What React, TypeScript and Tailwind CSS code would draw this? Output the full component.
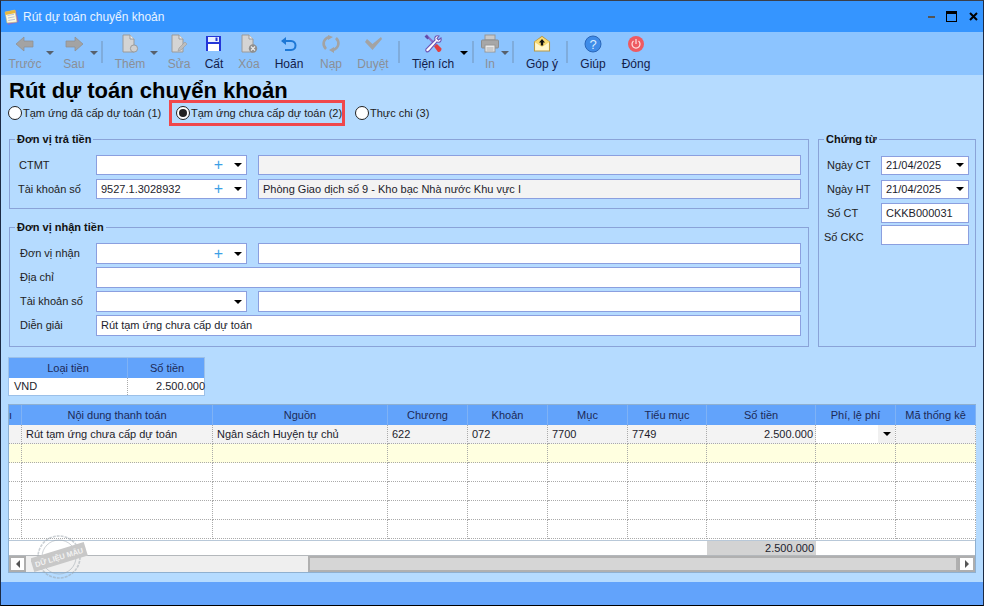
import React from "react";

const G = "#a3a3a3";
const Svg = ({ children }: { children: React.ReactNode }) => (
  <svg width="20" height="20" viewBox="0 0 20 20">{children}</svg>
);

const ArrowL = () => (
  <Svg><path d="M1 10 L9 3 V7 H18 V13 H9 V17 Z" fill={G} stroke="#8e8e8e" strokeWidth="0.7" /></Svg>
);
const ArrowR = () => (
  <Svg><path d="M19 10 L11 3 V7 H2 V13 H11 V17 Z" fill={G} stroke="#8e8e8e" strokeWidth="0.7" /></Svg>
);
const Doc = ({ children }: { children?: React.ReactNode }) => (
  <Svg>
    <path d="M3 1 H10 L14 5 V18 H3 Z" fill="#d4d4d4" stroke="#9a9a9a" strokeWidth="1" />
    <path d="M10 1 V5 H14" fill="#eee" stroke="#9a9a9a" strokeWidth="1" />
    {children}
  </Svg>
);
const Floppy = () => (
  <Svg>
    <rect x="2" y="2" width="15" height="15" fill="#2436d8" />
    <rect x="4" y="3" width="11" height="5" fill="#e8f0ff" />
    <rect x="11.5" y="3.5" width="2" height="3.5" fill="#2436d8" />
    <rect x="4" y="10" width="11" height="7" fill="#fff" />
  </Svg>
);
const Undo = () => (
  <Svg>
    <path d="M3 7 H12 C18 7 18 16 12 16 H6" fill="none" stroke="#1d78d6" strokeWidth="2" />
    <path d="M7 3 L2 7 L7 11 Z" fill="#1d78d6" />
  </Svg>
);
const Reload = () => (
  <Svg>
    <path d="M5 15 C1 11 2 5 8 3 M15 4 C19 8 18 14 12 16" fill="none" stroke={G} strokeWidth="2.6" />
    <path d="M7 1 L12 3 L7 6 Z M13 13 L8 16 L13 19 Z" fill={G} />
  </Svg>
);
const Check = () => (
  <Svg><path d="M2 8 L4 5 L9.5 10 L18 3 L19 5 L9.5 16 Z" fill={G} /></Svg>
);
const Tools = () => (
  <Svg>
    <path d="M3 1 L17 15" stroke="#8b6fc9" strokeWidth="2.2" />
    <path d="M1.5 2.5 L4 1 L6 4 L4.5 5.5 Z" fill="#5f4aa8" />
    <path d="M16 2 C13 1 11 3 12 6 L3 15 C2 17 4 19 6 17 L14 8 C17 9 19 7 18 4 L15.5 6 L14 4.5 Z" fill="#fff" stroke="#6d55b5" strokeWidth="1.1" />
    <path d="M11 12.5 L14 10 L18.5 14.5 C18.5 17 17 18.5 15 18 Z" fill="#e2403f" />
  </Svg>
);
const Printer = () => (
  <Svg>
    <rect x="5" y="1" width="10" height="5" fill="#c9c9c9" stroke="#979797" />
    <rect x="1.5" y="6" width="17" height="8" rx="1" fill="#a7a7a7" stroke="#8d8d8d" />
    <rect x="5" y="11" width="10" height="7" fill="#ececec" stroke="#979797" />
    <path d="M6.5 14 H13.5 M6.5 16 H13.5" stroke="#a8a8a8" />
  </Svg>
);
const Mail = () => (
  <Svg>
    <path d="M2.5 8 L10 2.5 L17.5 8 V17 H2.5 Z" fill="#fff7cf" stroke="#b99a45" strokeWidth="1.1" />
    <path d="M2.5 8 L10 13 L17.5 8 L10 3 Z" fill="#f8da72" />
    <path d="M10 5 L13 8.5 H11.2 V11.5 H8.8 V8.5 H7 Z" fill="#111" />
  </Svg>
);
const Help = () => (
  <svg width="20" height="20" viewBox="0 0 20 20">
    <circle cx="10" cy="10" r="8" fill="#3f8ce8" stroke="#2a66b8" />
    <text x="10" y="14.5" textAnchor="middle" fontSize="13" fill="#d8ecff" fontFamily="'Liberation Sans', sans-serif">?</text>
  </svg>
);
const Power = () => (
  <svg width="20" height="20" viewBox="0 0 20 20">
    <circle cx="10" cy="10" r="8" fill="#ee5a61" />
    <path d="M7.5 7 A4 4 0 1 0 12.5 7" fill="none" stroke="#ffe2e2" strokeWidth="1.2" />
    <path d="M10 5 V10" stroke="#ffe2e2" strokeWidth="1.2" />
  </svg>
);

const Caret = ({ dim }: { dim?: boolean }) => (
  <div className={`w-0 h-0 border-x-[4px] border-x-transparent border-t-[4px] ${dim ? "border-t-[#57606c]" : "border-t-black"}`} />
);

const Tool = ({ label, icon, off, className }: { label: string; icon: React.ReactNode; off?: boolean; className: string }) => (
  <div className={`flex flex-col items-center shrink-0 ${className}`}>
    <div className="h-[20px] mt-[2px] flex items-center">{icon}</div>
    <div className={`mt-[2px] text-[12px] leading-[16px] whitespace-nowrap ${off ? "text-[#8b8f96]" : "text-[#14204a]"}`}>{label}</div>
  </div>
);
const Drop = ({ className, dim }: { className: string; dim?: boolean }) => (
  <div className={`shrink-0 flex justify-center pt-[19px] ${className}`}><Caret dim={dim} /></div>
);
const Sep = ({ className }: { className: string }) => (
  <div className={`shrink-0 w-[2px] h-[22px] mt-[9px] bg-[#7facdc] ${className}`} />
);

const Box = ({ className, value, plus, drop, off }: { className: string; value?: string; plus?: boolean; drop?: boolean; off?: boolean }) => (
  <div className={`shrink-0 border border-[#8b9fdf] flex items-center pl-[4px] text-[11px] text-[#1c1c2c] whitespace-nowrap overflow-hidden ${off ? "bg-[#f3f3f3]" : "bg-white"} ${className}`}>
    <span className="flex-1">{value}</span>
    {plus && <span className="text-[16px] leading-none text-[#3d9fe6] mr-[11px]">+</span>}
    {drop && <span className="mr-[4px]"><Caret /></span>}
  </div>
);

const Row = ({ label, children, className }: { label: string; children: React.ReactNode; className: string }) => (
  <div className="flex items-center">
    <div className={`w-[86px] shrink-0 text-[11px] text-[#222] whitespace-nowrap ${className}`}>{label}</div>
    {children}
  </div>
);

const Legend = ({ children }: { children: React.ReactNode }) => (
  <legend className="ml-[5px] px-[2px] text-[11px] leading-[14px] font-bold text-[#111]">{children}</legend>
);

const Radio = ({ on, label, className }: { on?: boolean; label: string; className: string }) => (
  <div className={`flex items-center shrink-0 ${className}`}>
    <div className="w-[14px] h-[14px] shrink-0 rounded-full bg-white border border-[#222] flex items-center justify-center">
      {on && <div className="w-[8px] h-[8px] rounded-full bg-[#222]" />}
    </div>
    <span className="ml-[1px] text-[11px] text-[#222] whitespace-nowrap">{label}</span>
  </div>
);

const cols = "grid grid-cols-[13px_191px_175px_80px_80px_80px_79px_109px_80px_80px]";
const heads = ["", "Nội dung thanh toán", "Nguồn", "Chương", "Khoản", "Mục", "Tiểu mục", "Số tiền", "Phí, lệ phí", "Mã thống kê"];
const first = ["", "Rút tạm ứng chưa cấp dự toán", "Ngân sách Huyện tự chủ", "622", "072", "7700", "7749", "2.500.000", "", ""];
const cell = "h-[19px] border-r border-b border-dotted border-[#aaaaaa]";

const BodyRow = ({ tone }: { tone: string }) => (
  <div className={cols}>
    {heads.map((_, i) => <div key={i} className={`${cell} ${tone}`} />)}
  </div>
);

export default function App() {
  return (
    <div className="w-[984px] h-[606px] flex flex-col border-t border-b border-x border-t-[#3a3f4a] border-b-black border-x-[#1b2a44] overflow-hidden font-['Liberation_Sans',sans-serif]">
      <div className="h-[31px] shrink-0 bg-[#3595ff] flex items-center">
        <svg className="ml-[3px]" width="17" height="18" viewBox="0 0 17 18">
          <path d="M2 5 L12 2 L15 14 L4 17 Z" fill="#7f6fd8" />
          <path d="M1 4 L11 2 L13 14 L3 15 Z" fill="#fdf8e0" stroke="#c8b870" strokeWidth="0.6" />
          <path d="M1 4 L11 2 L11.6 5 L1.6 7 Z" fill="#e8b73e" />
          <path d="M3.5 7.5 L10 6.3 M4 10 L10.5 8.8 M4.3 12.5 L11 11.3" stroke="#b9c4d8" />
        </svg>
        <span className="ml-[2px] text-[12px] text-[#e8f3ff] whitespace-nowrap">Rút dự toán chuyển khoản</span>
        <div className="flex-1" />
        <div className="w-[7px] h-[2px] bg-[#555]" />
        <div className="ml-[11px] w-[11px] h-[11px] border border-black border-t-[3px]" />
        <span className="ml-[11px] mr-[4px] w-[11px] h-[11px] flex items-center justify-center">
          <svg width="9" height="9" viewBox="0 0 9 9"><path d="M1 1 L8 8 M8 1 L1 8" stroke="#000" strokeWidth="2" /></svg>
        </span>
      </div>

      <div className="h-[43px] shrink-0 bg-[#8cc4ff] flex pl-[6px]">
        <Tool className="w-[36px]" off label="Trước" icon={<ArrowL />} />
        <Drop className="w-[13px]" dim />
        <Tool className="w-[36px]" off label="Sau" icon={<ArrowR />} />
        <Drop className="w-[2px] ml-[1px]" dim />
        <Sep className="ml-[6px]" />
        <Tool className="w-[40px] ml-[7px]" off label="Thêm" icon={<Doc><circle cx="14" cy="14.5" r="3.6" fill="#cfcfcf" stroke="#9a9a9a" /></Doc>} />
        <Drop className="w-[8px]" dim />
        <Tool className="w-[30px] ml-[6px]" off label="Sửa" icon={<Doc><path d="M9 17 L10 14 L16 8 L18 10 L12 16 Z" fill="#bdbdbd" stroke="#9a9a9a" strokeWidth="0.6" /></Doc>} />
        <Tool className="w-[30px] ml-[5px]" label="Cất" icon={<Floppy />} />
        <Tool className="w-[30px] ml-[5px]" off label="Xóa" icon={<Doc><circle cx="14" cy="14.5" r="4.2" fill="#8f8f8f" /><path d="M12 12.5 L16 16.5 M16 12.5 L12 16.5" stroke="#eee" strokeWidth="1.1" /></Doc>} />
        <Tool className="w-[40px] ml-[5px]" label="Hoãn" icon={<Undo />} />
        <Tool className="w-[36px] ml-[4px]" off label="Nạp" icon={<Reload />} />
        <Tool className="w-[40px] ml-[4px]" off label="Duyệt" icon={<Check />} />
        <Sep className="ml-[5px]" />
        <Tool className="w-[52px] ml-[7px]" label="Tiện ích" icon={<Tools />} />
        <Drop className="w-[8px] ml-[1px]" />
        <Sep className="ml-[4px]" />
        <Tool className="w-[22px] ml-[5px]" off label="In" icon={<Printer />} />
        <Drop className="w-[8px]" dim />
        <Sep className="ml-[3px]" />
        <Tool className="w-[44px] ml-[6px]" label="Góp ý" icon={<Mail />} />
        <Sep className="ml-[2px]" />
        <Tool className="w-[36px] ml-[7px]" label="Giúp" icon={<Help />} />
        <Tool className="w-[40px] ml-[5px]" label="Đóng" icon={<Power />} />
      </div>

      <div className="flex-1 bg-[#b5dbff] flex flex-col min-h-0">
        <div className="h-[25px] pl-[8px] font-bold text-[22px] leading-[31px] text-black whitespace-nowrap">Rút dự toán chuyển khoản</div>
        <div className="h-[26px] flex items-center pl-[7px]">
          <Radio className="w-[161px]" label="Tạm ứng đã cấp dự toán (1)" />
          <div className="w-[176px] h-[26px] border-[3px] border-[#f0474c] flex items-center pl-[4px] shrink-0">
            <Radio on className="" label="Tạm ứng chưa cấp dự toán (2)" />
          </div>
          <Radio className="ml-[10px]" label="Thực chi (3)" />
        </div>

        <div className="flex mt-[6px] ml-[8px] h-[215px]">
          <div className="w-[800px] shrink-0 flex flex-col gap-[11px]">
            <fieldset className="h-[77px] border border-[#8aa3d8]">
              <Legend>Đơn vị trả tiền</Legend>
              <div className="mt-[9px] flex flex-col gap-[4px]">
                <Row label="CTMT" className="pl-[9px]">
                  <Box className="w-[151px] h-[20px]" plus drop />
                  <Box className="ml-[11px] w-[543px] h-[20px]" off />
                </Row>
                <Row label="Tài khoản số" className="pl-[8px]">
                  <Box className="w-[151px] h-[20px]" value="9527.1.3028932" plus drop />
                  <Box className="ml-[11px] w-[543px] h-[20px]" off value="Phòng Giao dịch số 9 - Kho bạc Nhà nước Khu vực I" />
                </Row>
              </div>
            </fieldset>
            <fieldset className="h-[127px] border border-[#8aa3d8]">
              <Legend>Đơn vị nhận tiền</Legend>
              <div className="mt-[9px] flex flex-col gap-[3px]">
                <Row label="Đơn vị nhận" className="pl-[10px]">
                  <Box className="w-[151px] h-[21px]" plus drop />
                  <Box className="ml-[11px] w-[543px] h-[21px]" />
                </Row>
                <Row label="Địa chỉ" className="pl-[10px]">
                  <Box className="w-[705px] h-[21px]" />
                </Row>
                <Row label="Tài khoản số" className="pl-[10px]">
                  <Box className="w-[151px] h-[21px]" drop />
                  <Box className="ml-[11px] w-[543px] h-[21px]" />
                </Row>
                <Row label="Diễn giải" className="pl-[10px]">
                  <Box className="w-[705px] h-[21px]" value="Rút tạm ứng chưa cấp dự toán" />
                </Row>
              </div>
            </fieldset>
          </div>
          <fieldset className="ml-[9px] w-[158px] h-[215px] border border-[#8aa3d8]">
            <Legend>Chứng từ</Legend>
            <div className="mt-[9px] flex flex-col">
              <div className="flex items-center h-[20px]">
                <span className="w-[62px] pl-[8px] shrink-0 text-[11px] text-[#222] whitespace-nowrap">Ngày CT</span>
                <Box className="w-[88px] h-[19px] pl-[3px]" value="21/04/2025" drop />
              </div>
              <div className="flex items-center h-[20px] mt-[4px]">
                <span className="w-[62px] pl-[8px] shrink-0 text-[11px] text-[#222] whitespace-nowrap">Ngày HT</span>
                <Box className="w-[88px] h-[19px] pl-[3px]" value="21/04/2025" drop />
              </div>
              <div className="flex items-center h-[20px] mt-[4px]">
                <span className="w-[62px] pl-[8px] shrink-0 text-[11px] text-[#222] whitespace-nowrap">Số CT</span>
                <Box className="w-[88px] h-[20px]" value="CKKB000031" />
              </div>
              <div className="flex items-center h-[20px] mt-[2px]">
                <span className="w-[62px] pl-[5px] pt-[5px] shrink-0 text-[11px] text-[#222] whitespace-nowrap">Số CKC</span>
                <Box className="w-[88px] h-[20px]" />
              </div>
            </div>
          </fieldset>
        </div>

        <div className="mt-[10px] ml-[7px] w-[197px] h-[39px] border border-[#9cc0e8] bg-white">
          <div className="grid grid-cols-[119px_78px] h-[20px] bg-[#62a3fb] text-[11px] text-[#1c2a58] text-center leading-[20px]">
            <div className="border-r border-[#7fb2f5]">Loại tiền</div>
            <div>Số tiền</div>
          </div>
          <div className="grid grid-cols-[119px_78px] h-[17px] text-[11px] leading-[17px] text-[#1c1c2c]">
            <div className="pl-[5px] border-r border-dotted border-[#aaa]">VND</div>
            <div className="text-right pr-[1px]">2.500.000</div>
          </div>
        </div>

        <div className="relative mt-[8px] ml-[7px] w-[968px] h-[169px] border border-[#8fb0d0] bg-white flex flex-col">
          <div className={`${cols} h-[20px] bg-[#62a3fb] text-[11px] leading-[20px] text-[#1c2a58] text-center shrink-0`}>
            {heads.map((h, i) => <div key={i} className="border-r border-[#7fb2f5] whitespace-nowrap overflow-hidden">{i === 0 ? <span className="block text-left">ı</span> : h}</div>)}
          </div>
          <div className={cols}>
            {first.map((t, i) => (
              <div key={i} className={`${cell} text-[11px] leading-[18px] text-[#1c1c2c] whitespace-nowrap overflow-hidden ${i === 8 ? "bg-white flex justify-end" : "bg-[#f3f3f3]"} ${i === 7 ? "text-right pr-[2px]" : "pl-[4px]"}`}>
                {i === 8 ? <div className="w-[17px] h-full bg-[#f0f0f0] flex items-center justify-center"><Caret /></div> : t}
              </div>
            ))}
          </div>
          <BodyRow tone="bg-[#ffffe0]" />
          <BodyRow tone="bg-white" />
          <BodyRow tone="bg-white" />
          <BodyRow tone="bg-white" />
          <BodyRow tone="bg-white" />
          <div className={`${cols} h-[15px] mt-[1px] border-t border-[#b8c8d8] text-[11px] leading-[14px] text-[#1c1c2c] shrink-0`}>
            {heads.map((_, i) => <div key={i} className={i === 7 ? "bg-[#d3d3d3] text-right pr-[2px]" : ""}>{i === 7 ? "2.500.000" : ""}</div>)}
          </div>
          <div className="flex-1 flex border-t border-[#b4b8bc] bg-[#efefef] min-h-0">
            <div className="w-[17px] border-2 border-[#aeaeae] bg-white flex items-center justify-center">
              <div className="w-0 h-0 border-y-[4px] border-y-transparent border-r-[4px] border-r-[#555]" />
            </div>
            <div className="w-[282px]" />
            <div className="flex-1 border-2 border-[#b0b0b0] bg-[#d6d6d6]" />
            <div className="w-[17px] border-2 border-[#aeaeae] bg-white flex items-center justify-center">
              <div className="w-0 h-0 border-y-[4px] border-y-transparent border-l-[4px] border-l-[#555]" />
            </div>
          </div>
          <svg className="absolute left-[22px] top-[128px]" width="60" height="48" viewBox="0 0 60 48">
            <circle cx="28" cy="24" r="21" fill="none" stroke="#9aa4ac" strokeOpacity="0.5" strokeWidth="1.6" strokeDasharray="3 1" />
            <circle cx="28" cy="24" r="17" fill="none" stroke="#9aa4ac" strokeOpacity="0.5" strokeWidth="1" />
            <rect x="0" y="17" width="56" height="14" fill="#c8c8c8" transform="rotate(-17 28 24)" />
            <text x="28" y="27" textAnchor="middle" fontSize="7.5" fontWeight="bold" fill="#f2f2f2" transform="rotate(-17 28 24)" fontFamily="'Liberation Sans', sans-serif">DỮ LIỆU MẪU</text>
          </svg>
        </div>
        <div className="flex-1" />
      </div>

      <div className="h-[23px] shrink-0 bg-[#62a3fb]" />
    </div>
  );
}
